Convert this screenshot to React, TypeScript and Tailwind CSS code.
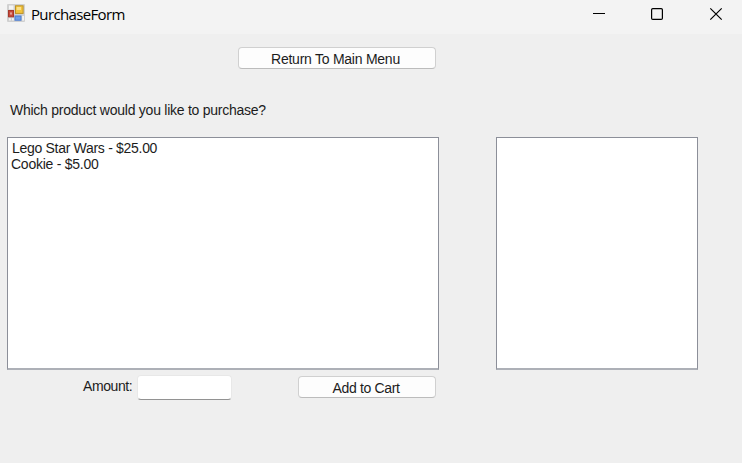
import type { ReactNode } from 'react';

function FormIcon() {
  return (
    <svg width="18" height="18" viewBox="0 0 18 18" className="shrink-0">
      <rect width="18" height="18" rx="1" fill="#d0d0d0" />
      <rect x="2" y="1.5" width="4.5" height="4" fill="#f4f4f4" />
      <rect x="2" y="14.2" width="1.8" height="2.2" fill="#f4f4f4" />
      <rect x="5" y="14.2" width="1.8" height="2.2" fill="#f4f4f4" />
      <rect x="15.2" y="12" width="1.8" height="4.5" fill="#f4f4f4" />
      <rect x="1.5" y="6.5" width="5" height="6.3" fill="#c8483a" stroke="#a5382c" />
      <rect x="3" y="8.4" width="2" height="2.2" fill="#e3a096" />
      <rect x="8.5" y="1.8" width="7.6" height="7.6" fill="#f2c33c" stroke="#bd9224" />
      <rect x="9.7" y="3" width="4.3" height="3" fill="#fbe08a" />
      <rect x="8" y="12" width="6" height="4.2" fill="#6f9fe8" stroke="#4a7dd2" />
    </svg>
  );
}

function FormButton({ className, children }: { className: string; children: ReactNode }) {
  return (
    <button
      className={`flex items-center justify-center rounded border border-[#d0d0d0] border-b-[#bcbcbc] bg-[#fdfdfd] pt-px ${className}`}
    >
      {children}
    </button>
  );
}

export default function App() {
  return (
    <div className="flex h-[463px] w-[742px] flex-col overflow-hidden bg-[#efefef] font-['Liberation_Sans',Arial,sans-serif] text-[14px] leading-4 text-[#1c1c1c]">
      <header className="flex h-[34px] shrink-0 items-start justify-between bg-[#f3f3f3]">
        <div className="flex items-start gap-1.5 pl-[7px] pt-1">
          <FormIcon />
          <h1 className="font-['Open_Sans','Noto_Sans',sans-serif] text-[15px] leading-5 tracking-[-0.65px] text-black">PurchaseForm</h1>
        </div>
        <div className="flex">
          <svg width="149" height="28" fill="none" stroke="#000" strokeWidth="1.2">
            <path d="M0 13.5h12" strokeWidth="1" />
            <rect x="58.6" y="8.6" width="10.8" height="10.8" rx="1.2" />
            <path d="M117.3 8.3l11.4 11.4M128.7 8.3l-11.4 11.4" />
          </svg>
        </div>
      </header>
      <main className="flex flex-col pl-[7px]">
        <FormButton className="ml-[231px] mt-[13px] h-[22px] w-[198px] pr-[3px]">
          <span className="tracking-[-0.25px]">Return To Main Menu</span>
        </FormButton>
        <p className="ml-[3px] mt-[33px] h-[35px] whitespace-nowrap tracking-[-0.25px]">Which product would you like to purchase?</p>
        <div className="flex gap-[57px]">
          <ul className="h-[233px] w-[432px] border border-[#8c8f99] border-b-2 border-b-[#adb0b7] bg-white pl-[3px] pt-[2px]">
            <li className="pl-px tracking-[-0.3px]">Lego Star Wars - $25.00</li>
            <li className="tracking-[-0.25px]">Cookie - $5.00</li>
          </ul>
          <ul className="h-[233px] w-[202px] border border-[#8c8f99] border-b-2 border-b-[#adb0b7] bg-white" />
        </div>
        <div className="flex items-start pl-[76px] pt-[5px]">
          <label htmlFor="amount" className="w-[54px] pt-[3px] tracking-[-0.4px]">Amount:</label>
          <input id="amount" className="h-[25px] w-[95px] rounded-sm border border-[#e8e8e8] border-b-[#929292] bg-white" />
          <FormButton className="ml-[66px] mt-px h-[22px] w-[138px] pr-[2px]">
            <span className="tracking-[-0.35px]">Add to Cart</span>
          </FormButton>
        </div>
      </main>
    </div>
  );
}
